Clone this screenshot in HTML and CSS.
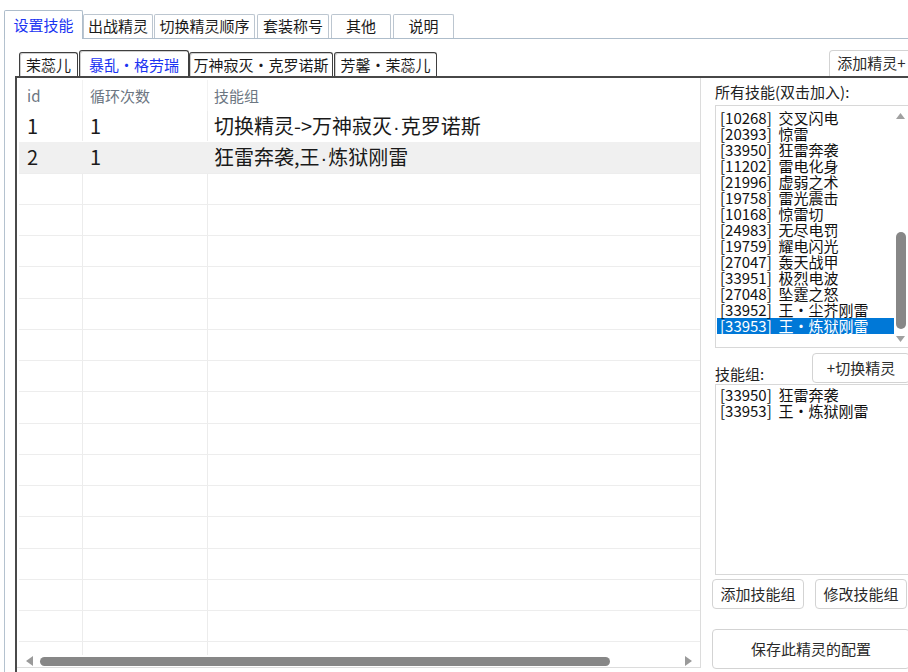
FILE: index.html
```html
<!DOCTYPE html>
<html lang="zh-CN">
<head>
<meta charset="utf-8">
<title>设置技能</title>
<link rel="stylesheet" href="styles.css">
</head>
<body>
<div class="app">
  <div class="top-tabs">
    <div class="ttab active tw1">设置技能</div>
    <div class="ttab tw2">出战精灵</div>
    <div class="ttab tw3">切换精灵顺序</div>
    <div class="ttab tw4">套装称号</div>
    <div class="ttab tw5">其他</div>
    <div class="ttab tw6">说明</div>
  </div>
  <div class="outer-panel">
    <div class="inner-strip">
      <div class="itab iw1">茉蕊儿</div>
      <div class="itab active iw2">暴乱・格劳瑞</div>
      <div class="itab iw3">万神寂灭・克罗诺斯</div>
      <div class="itab iw4">芳馨・茉蕊儿</div>
      <div class="btn add-sprite">添加精灵+</div>
    </div>
    <div class="inner-panel">
      <div class="grid">
        <div class="row head">
          <div class="cell c1">id</div>
          <div class="cell c2">循环次数</div>
          <div class="cell c3">技能组</div>
        </div>
        <div class="grid-body">
          <div class="row data first">
            <div class="cell c1">1</div>
            <div class="cell c2">1</div>
            <div class="cell c3">切换精灵-&gt;万神寂灭<span class="dot">·</span>克罗诺斯</div>
          </div>
          <div class="row data alt">
            <div class="cell c1">2</div>
            <div class="cell c2">1</div>
            <div class="cell c3">狂雷奔袭,王<span class="dot">·</span>炼狱刚雷</div>
          </div>
          <div class="row data"><div class="cell c1"></div><div class="cell c2"></div><div class="cell c3"></div></div>
          <div class="row data"><div class="cell c1"></div><div class="cell c2"></div><div class="cell c3"></div></div>
          <div class="row data"><div class="cell c1"></div><div class="cell c2"></div><div class="cell c3"></div></div>
          <div class="row data"><div class="cell c1"></div><div class="cell c2"></div><div class="cell c3"></div></div>
          <div class="row data"><div class="cell c1"></div><div class="cell c2"></div><div class="cell c3"></div></div>
          <div class="row data"><div class="cell c1"></div><div class="cell c2"></div><div class="cell c3"></div></div>
          <div class="row data"><div class="cell c1"></div><div class="cell c2"></div><div class="cell c3"></div></div>
          <div class="row data"><div class="cell c1"></div><div class="cell c2"></div><div class="cell c3"></div></div>
          <div class="row data"><div class="cell c1"></div><div class="cell c2"></div><div class="cell c3"></div></div>
          <div class="row data"><div class="cell c1"></div><div class="cell c2"></div><div class="cell c3"></div></div>
          <div class="row data"><div class="cell c1"></div><div class="cell c2"></div><div class="cell c3"></div></div>
          <div class="row data"><div class="cell c1"></div><div class="cell c2"></div><div class="cell c3"></div></div>
          <div class="row data"><div class="cell c1"></div><div class="cell c2"></div><div class="cell c3"></div></div>
          <div class="row data"><div class="cell c1"></div><div class="cell c2"></div><div class="cell c3"></div></div>
          <div class="row data"><div class="cell c1"></div><div class="cell c2"></div><div class="cell c3"></div></div>
          <div class="row data"><div class="cell c1"></div><div class="cell c2"></div><div class="cell c3"></div></div>
        </div>
        <div class="hscroll">
          <svg class="harrow" width="7" height="10" viewBox="0 0 7 10"><polygon points="7,0 7,10 0,5" fill="#9a9a9a"/></svg>
          <div class="hthumb"></div>
          <svg class="harrow right" width="7" height="10" viewBox="0 0 7 10"><polygon points="0,0 0,10 7,5" fill="#9a9a9a"/></svg>
        </div>
      </div>
      <div class="side">
        <div class="label">所有技能(双击加入):</div>
        <div class="listbox lb1">
          <div class="items">
            <div class="item">[10268]&nbsp; 交叉闪电</div>
            <div class="item">[20393]&nbsp; 惊雷</div>
            <div class="item">[33950]&nbsp; 狂雷奔袭</div>
            <div class="item">[11202]&nbsp; 雷电化身</div>
            <div class="item">[21996]&nbsp; 虚弱之术</div>
            <div class="item">[19758]&nbsp; 雷光震击</div>
            <div class="item">[10168]&nbsp; 惊雷切</div>
            <div class="item">[24983]&nbsp; 无尽电罚</div>
            <div class="item">[19759]&nbsp; 耀电闪光</div>
            <div class="item">[27047]&nbsp; 轰天战甲</div>
            <div class="item">[33951]&nbsp; 极烈电波</div>
            <div class="item">[27048]&nbsp; 坠霆之怒</div>
            <div class="item">[33952]&nbsp; 王・尘芥刚雷</div>
            <div class="item selected">[33953]&nbsp; 王・炼狱刚雷</div>
          </div>
          <div class="vscroll">
            <svg class="varrow" width="9" height="6" viewBox="0 0 9 6"><polygon points="0,6 9,6 4.5,0" fill="#a0a0a0"/></svg>
            <div class="vspace"></div>
            <div class="vthumb"></div>
            <svg class="varrow down" width="9" height="6" viewBox="0 0 9 6"><polygon points="0,0 9,0 4.5,6" fill="#a0a0a0"/></svg>
          </div>
        </div>
        <div class="group-row">
          <div class="label small">技能组:</div>
          <div class="btn switch">+切换精灵</div>
        </div>
        <div class="listbox lb2">
          <div class="items">
            <div class="item">[33950]&nbsp; 狂雷奔袭</div>
            <div class="item">[33953]&nbsp; 王・炼狱刚雷</div>
          </div>
        </div>
        <div class="btn-row">
          <div class="btn half">添加技能组</div>
          <div class="btn half">修改技能组</div>
        </div>
        <div class="btn save">保存此精灵的配置</div>
      </div>
    </div>
  </div>
</div>
</body>
</html>
```
FILE: styles.css
```css
* { box-sizing: border-box; }
html, body {
  margin: 0;
  padding: 0;
  background: #fff;
  overflow: hidden;
}
body {
  width: 908px;
  height: 672px;
  font-family: "Noto Sans CJK SC", "Microsoft YaHei", sans-serif;
  color: #1a1a1a;
}
.app {
  width: 912px;
  height: 672px;
  padding: 10px 0 0 4px;
  display: flex;
  flex-direction: column;
}

/* top tabs */
.top-tabs {
  display: flex;
  align-items: flex-end;
  height: 29px;
  border-bottom: 1px solid #aebdcb;
}
.ttab {
  height: 24px;
  border: 1px solid #bcc6d0;
  border-bottom: none;
  border-radius: 2px 2px 0 0;
  font-size: 15px;
  line-height: 22px;
  text-align: center;
  background: #fff;
  color: #1a1a1a;
}
.ttab.active {
  height: 29px;
  margin-bottom: -1px;
  border-color: #aebdcb;
  color: #1b34f2;
  line-height: 28px;
}
.tw1 { width: 79px; }
.tw2 { width: 70px; }
.tw3 { width: 101px; margin-left: 1px; }
.tw4 { width: 72px; margin-left: 2px; }
.tw5 { width: 60px; margin-left: 2px; }
.tw6 { width: 61px; margin-left: 2px; }

/* outer panel */
.outer-panel {
  flex: 1;
  border-left: 1px solid #b4c2cf;
  padding: 11px 0 0 10px;
  display: flex;
  flex-direction: column;
}
.inner-strip {
  display: flex;
  align-items: flex-end;
  height: 28px;
  padding-left: 4px;
  border-bottom: 2px solid #474747;
}
.itab {
  height: 24px;
  border: 1px solid #3f3f3f;
  border-bottom: none;
  border-radius: 3px 3px 0 0;
  box-shadow: inset 1px 1px 0 #cfcfcf;
  font-size: 15px;
  line-height: 24px;
  text-align: center;
  color: #1a1a1a;
  background: #fff;
}
.itab.active {
  height: 26px;
  color: #1b34f2;
  line-height: 27px;
}
.iw1 { width: 59px; }
.iw2 { width: 110px; margin-left: 1px; }
.iw3 { width: 144px; }
.iw4 { width: 103px; margin-left: 1px; }

.btn {
  border: 1px solid #d3d3d3;
  border-radius: 4px;
  background: #fff;
  font-size: 15px;
  color: #2a2a2a;
  text-align: center;
  white-space: nowrap;
}
.add-sprite {
  margin-left: auto;
  width: 83px;
  height: 26px;
  line-height: 24px;
  border-bottom: none;
  border-radius: 4px 4px 0 0;
  padding-left: 2px;
}

/* inner panel */
.inner-panel {
  flex: 1;
  display: flex;
  border-left: 2px solid #4a4a4a;
  min-height: 0;
}
.grid {
  width: 684px;
  height: 590px;
  border-right: 1px solid #dcdcdc;
  border-bottom: 1px solid #dcdcdc;
  padding-left: 2px;
  display: flex;
  flex-direction: column;
}
.row {
  display: flex;
  flex: none;
}
.cell {
  padding-left: 8px;
  white-space: nowrap;
  overflow: hidden;
}
.c1 { width: 63px; }
.c2 { width: 125px; border-left: 1px solid #ececec; padding-left: 7px; }
.c3 { flex: 1; border-left: 1px solid #ececec; padding-left: 6px; }
.head {
  height: 33px;
  padding-top: 2px;
  font-size: 15px;
  line-height: 31px;
  color: #6c7682;
}
.head .cell { height: 31px; border-color: #f2f2f2; }
.grid-body {
  flex: 1;
  overflow: hidden;
  min-height: 0;
}
.data {
  height: 31.25px;
  border-bottom: 1px solid #ededed;
  font-size: 20px;
  line-height: 30px;
  color: #1a1a1a;
}
.dot {
  font-family: "Liberation Sans", sans-serif;
  padding: 0 1px;
}
.data.first { border-bottom-color: transparent; }
.data.alt { background: #f0f0f0; }
.data.alt .cell { border-color: #f0f0f0; }
.hscroll {
  height: 12px;
  flex: none;
  display: flex;
  align-items: center;
  padding-left: 7px;
}
.harrow { flex: none; }
.hthumb {
  width: 570px;
  height: 9px;
  margin-left: 7px;
  border-radius: 5px;
  background: #878787;
}
.harrow.right { margin-left: 75px; }

/* side panel */
.side {
  margin-left: 11px;
  width: 198px;
  padding-top: 4px;
  display: flex;
  flex-direction: column;
}
.label {
  height: 20px;
  margin-left: 3px;
  font-size: 15px;
  line-height: 20px;
  color: #222;
}
.listbox {
  margin-left: 3px;
  border: 1px solid #d8d8d8;
  display: flex;
  background: #fff;
}
.lb1 {
  margin-top: 3px;
  height: 243px;
  padding: 4px 0 0 1px;
}
.items { flex: 1; }
.item {
  height: 16px;
  padding-left: 3px;
  font-size: 15px;
  line-height: 16px;
  color: #111;
  white-space: nowrap;
}
.item.selected {
  background: #0078d7;
  color: #fff;
}
.vscroll {
  width: 13px;
  margin-right: 2px;
  display: flex;
  flex-direction: column;
  align-items: center;
  padding: 3px 0 5px;
}
.vspace { flex: 1; }
.vthumb {
  width: 10px;
  height: 97px;
  border-radius: 5px;
  background: #878787;
}
.varrow.down { margin-top: 7px; }
.group-row {
  display: flex;
  align-items: flex-end;
  margin-top: 5px;
}
.label.small { flex: 1; height: 18px; line-height: 18px; }
.switch {
  width: 98px;
  height: 30px;
  line-height: 28px;
}
.lb2 {
  margin-top: 1px;
  height: 191px;
  padding: 2px 0 0 1px;
}
.btn-row {
  display: flex;
  justify-content: space-between;
  margin-top: 4px;
  padding-right: 3px;
}
.half {
  width: 92px;
  height: 30px;
  line-height: 28px;
}
.save {
  margin-top: 20px;
  height: 40px;
  line-height: 38px;
}
```
